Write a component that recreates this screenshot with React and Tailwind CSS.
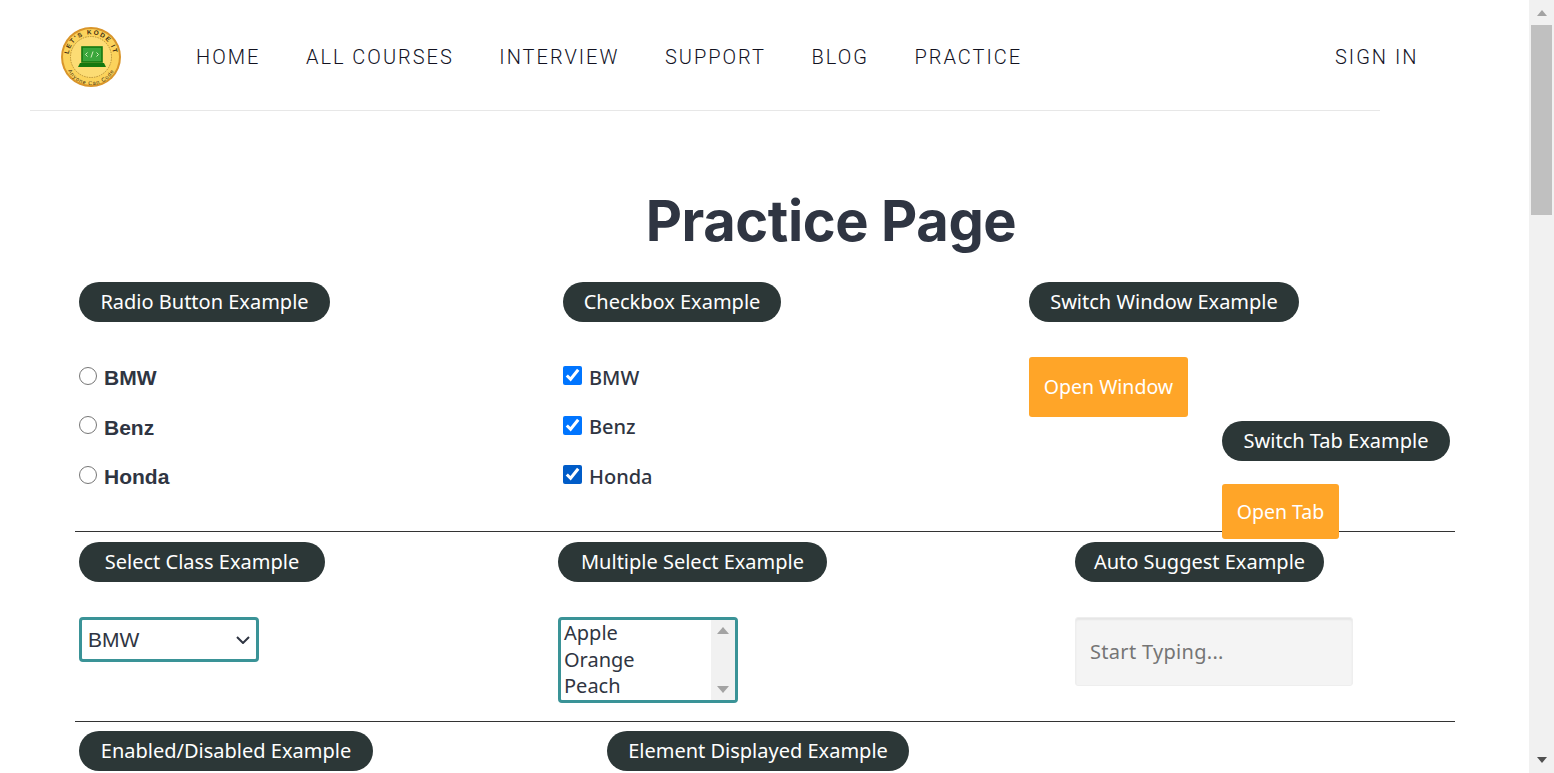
const NAV_LINKS = ["HOME", "ALL COURSES", "INTERVIEW", "SUPPORT", "BLOG", "PRACTICE"];
const CARS = ["BMW", "Benz", "Honda"];

const TITLE_FONT = "font-['Noto_Sans','Open_Sans',sans-serif]";

const Legend = ({ children, width }) => (
    <div
        className={`${width} h-10 flex items-center justify-center shrink-0 rounded-[20px] bg-[#2c3737] text-white text-[20px] leading-none ${TITLE_FONT}`}
    >
        {children}
    </div>
);

const Logo = () => (
    <svg width="60" height="60" viewBox="0 0 60 60" className="shrink-0">
        <defs>
            <path id="logoTop" d="M7.5 30 A22.5 22.5 0 0 1 52.5 30" />
            <path id="logoBottom" d="M4 32 A26 26 0 0 0 56 32" />
        </defs>
        <circle cx="30" cy="30" r="30" fill="#d9952a" />
        <circle cx="30" cy="30" r="28" fill="#fbd35c" />
        <circle cx="30" cy="30" r="20.5" fill="#fcdc74" stroke="#a9832f" strokeWidth="0.8" strokeDasharray="1.5 1" />
        <text fontSize="6.5" fontWeight="700" fill="#3f2c10" letterSpacing="1.4" fontFamily="'Liberation Sans', sans-serif">
            <textPath href="#logoTop" startOffset="50%" textAnchor="middle">LET'S KODE IT</textPath>
        </text>
        <text fontSize="5.5" fill="#3f2c10" letterSpacing="0.8" fontFamily="'Liberation Sans', sans-serif">
            <textPath href="#logoBottom" startOffset="50%" textAnchor="middle">Anyone Can Code</textPath>
        </text>
        <rect x="21" y="20" width="20" height="15" fill="#3aa63c" stroke="#14780f" strokeWidth="1.6" />
        <path d="M26.5 25.5 l-2 2 l2 2 M35.5 25.5 l2 2 l-2 2 M32 24.5 l-2 6" stroke="#e4f4c8" strokeWidth="0.9" fill="none" />
        <path d="M19 36 H43 L45 40 H17 Z" fill="#14780f" />
    </svg>
);

const Header = () => (
    <header className="ml-[30px] w-[1350px] h-[111px] border-b border-[#e7e7e7] flex">
        <div className="ml-[31px] mt-[27px]">
            <Logo />
        </div>
        <nav className="ml-[75px] mt-[44px] flex gap-[45.5px] h-[26px] font-['Roboto',sans-serif] font-light text-[20px] leading-[26px] tracking-[2px] text-[#12121f]">
            {NAV_LINKS.map((link) => (
                <a key={link}>{link}</a>
            ))}
        </nav>
        <a className="absolute left-[1335px] top-[44px] font-['Roboto',sans-serif] font-light text-[20px] leading-[26px] tracking-[2px] text-[#12121f]">
            SIGN IN
        </a>
    </header>
);

const Scrollbar = () => (
    <div className="w-[25px] h-full shrink-0 bg-[#f1f1f1] flex flex-col items-center">
        <svg width="12" height="8" viewBox="0 0 12 8" className="mt-[9px] fill-[#a3a3a3]">
            <path d="M6 1 L11 7 H1 Z" />
        </svg>
        <div className="w-[21px] h-[190px] mt-2 bg-[#c0c0c0]" />
        <svg width="12" height="8" viewBox="0 0 12 8" className="mt-auto mb-[9px] fill-[#505050]">
            <path d="M1 1 H11 L6 7 Z" />
        </svg>
    </div>
);

const ListBox = () => (
    <div className="w-[180px] h-[86px] border-[3px] border-[#3a9397] rounded-[4px] flex overflow-hidden">
        <div className={`flex-1 pl-[3px] text-[20px] leading-[26.5px] text-[#2f3542] ${TITLE_FONT}`}>
            <div>Apple</div>
            <div>Orange</div>
            <div>Peach</div>
        </div>
        <div className="w-[24px] bg-[#f1f1f1] flex flex-col items-center justify-between py-[7px]">
            <svg width="12" height="7" viewBox="0 0 12 7" className="fill-[#a3a3a3]">
                <path d="M6 0 L12 7 H0 Z" />
            </svg>
            <svg width="12" height="7" viewBox="0 0 12 7" className="fill-[#a3a3a3]">
                <path d="M0 0 H12 L6 7 Z" />
            </svg>
        </div>
    </div>
);

const App = () => {
    return (
        <div className="flex w-[1554px] h-[773px] overflow-hidden bg-white relative">
            <div className="w-[1529px] shrink-0">
                <Header />

                <h1 className="ml-[135px] w-[1392px] mt-[75px] text-center text-[56px] leading-[70px] font-bold text-[#2f3542] tracking-[-0.4px] font-['Inter',sans-serif]">
                    Practice Page
                </h1>

                {/* TOP ROW */}
                <section className="ml-[75px] w-[1380px] h-[249px] mt-[26px] flex pl-1">
                    <div className="w-[484px]">
                        <Legend width="w-[251px]">Radio Button Example</Legend>
                        <div className="mt-[44.4px] flex flex-col gap-[26.5px]">
                            {CARS.map((car) => (
                                <label key={car} className="flex items-center h-[23px] font-['Liberation_Sans',sans-serif] font-bold text-[21px] text-[#2f3542]">
                                    <input type="radio" name="car" className="w-[18px] h-[18px] m-0 mr-[7px] -translate-y-[2px]" />
                                    {car}
                                </label>
                            ))}
                        </div>
                    </div>

                    <div className="w-[466px]">
                        <Legend width="w-[218px]">Checkbox Example</Legend>
                        <div className={`mt-[44.4px] flex flex-col gap-[26.5px] font-medium text-[20px] text-[#2f3542] ${TITLE_FONT}`}>
                            {CARS.map((car, i) => (
                                <label key={car} className="flex items-center h-[23px]">
                                    <input
                                        type="checkbox"
                                        defaultChecked
                                        className={`w-[19px] h-[19px] m-0 mr-[7px] -translate-y-[2px] ${i === 2 ? "accent-[#005cc8]" : "accent-[#0075ff]"}`}
                                    />
                                    {car}
                                </label>
                            ))}
                        </div>
                    </div>

                    <div className="flex-1">
                        <Legend width="w-[270px]">Switch Window Example</Legend>
                        <button className={`w-[159px] h-[60px] mt-[35px] block rounded-[3px] bg-[#ffa528] text-white text-[19.5px] ${TITLE_FONT}`}>
                            Open Window
                        </button>
                        <div className="ml-[193px] mt-[4px] relative z-10">
                            <Legend width="w-[228px]">Switch Tab Example</Legend>
                            <button className={`w-[117px] h-[55px] mt-[23px] block rounded-[3px] bg-[#ffa528] text-white text-[19.5px] ${TITLE_FONT}`}>
                                Open Tab
                            </button>
                        </div>
                    </div>
                </section>

                {/* SELECT ROW */}
                <section className="ml-[75px] w-[1380px] h-[190px] border-t border-[#333] pt-[10px] flex pl-1">
                    <div className="w-[479px]">
                        <Legend width="w-[246px]">Select Class Example</Legend>
                        <div className="relative w-[180px] mt-[35px]">
                            <select className="block w-full h-[45px] pl-[6px] appearance-none border-[3px] border-[#3a9397] rounded-[4px] bg-white font-['Liberation_Sans',sans-serif] text-[21px] text-[#2f3542]">
                                <option>BMW</option>
                            </select>
                            <svg width="14" height="8" viewBox="0 0 14 8" className="absolute right-[9px] top-[19px] pointer-events-none">
                                <path d="M1 1 L7 7 L13 1" fill="none" stroke="#2f3542" strokeWidth="2" />
                            </svg>
                        </div>
                    </div>
                    <div className="w-[517px]">
                        <Legend width="w-[269px]">Multiple Select Example</Legend>
                        <div className="mt-[35px]">
                            <ListBox />
                        </div>
                    </div>
                    <div>
                        <Legend width="w-[249px]">Auto Suggest Example</Legend>
                        <input
                            placeholder="Start Typing..."
                            className={`block w-[278px] h-[69px] mt-[35px] px-[14px] rounded-[3px] border border-[#eeeeee] bg-[#f4f4f4] shadow-[inset_0_2px_2px_rgba(0,0,0,0.06)] text-[20px] tracking-[0.3px] placeholder:text-[#757575] ${TITLE_FONT}`}
                        />
                    </div>
                </section>

                {/* BOTTOM ROW */}
                <section className="ml-[75px] w-[1380px] border-t border-[#333] pt-[9px] flex pl-1">
                    <div className="w-[528px]">
                        <Legend width="w-[294px]">Enabled/Disabled Example</Legend>
                    </div>
                    <Legend width="w-[302px]">Element Displayed Example</Legend>
                </section>
            </div>
            <Scrollbar />
        </div>
    );
};

export default App;
